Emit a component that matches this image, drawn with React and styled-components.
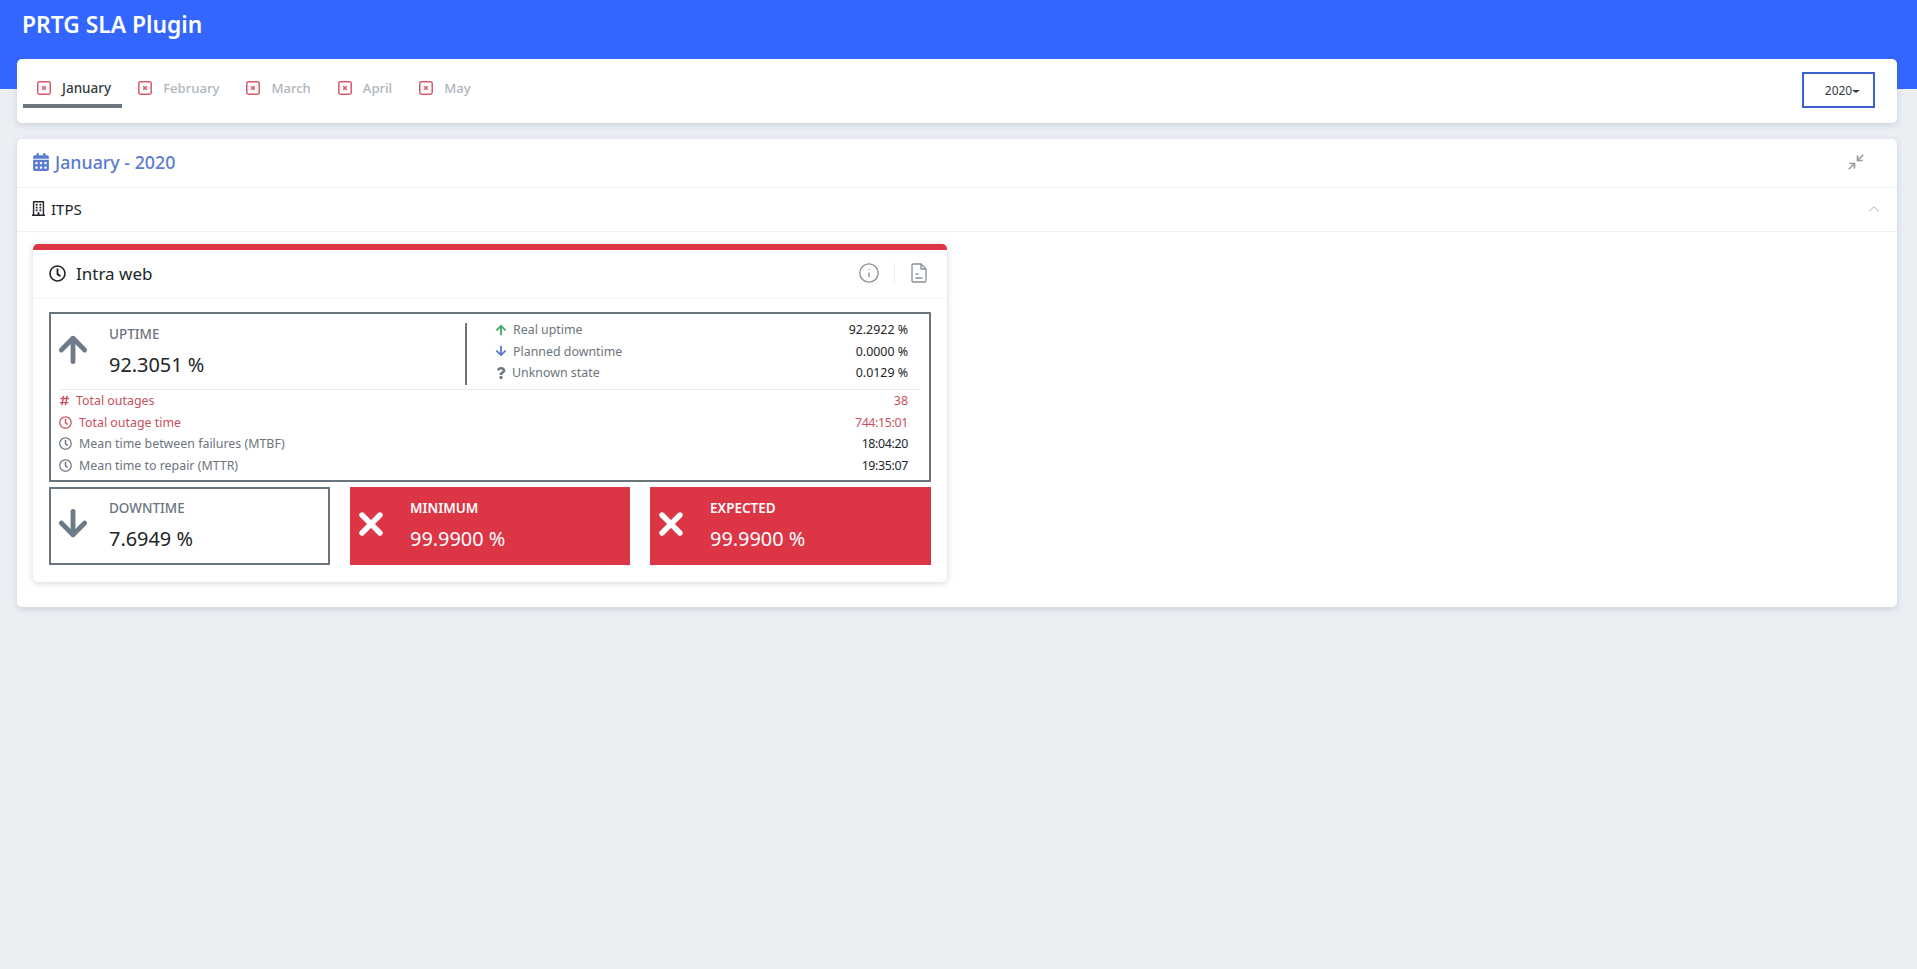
import React from "react";
import styled, { createGlobalStyle } from "styled-components";
import { FaArrowUp, FaArrowDown, FaQuestion, FaHashtag, FaRegClock, FaCalendarAlt, FaRegBuilding } from "react-icons/fa";
import { ArrowUp, ArrowDown, X, ChevronUp, Minimize2, Info } from "lucide-react";

const Global = createGlobalStyle`
  html, body { margin: 0; padding: 0; min-height: 969px; background: #ebeff4; }
  body { font-family: "Noto Sans", "Open Sans", sans-serif; color: #212529; }
  * { box-sizing: border-box; }
`;

const Header = styled.header`
  height: 89px;
  background: #3366ff;
  padding: 8px 0 0 22px;
`;
const Title = styled.h1`
  margin: 0;
  font-size: 22.8px;
  line-height: 34px;
  font-weight: 600;
  color: #fff;
`;
const Page = styled.main`
  padding: 0 20px 0 17px;
`;
const Card = styled.section`
  background: #fff;
  border-radius: 5px;
  box-shadow: 0 2px 6px rgba(70, 90, 120, 0.2);
`;
const Toolbar = styled(Card)`
  margin-top: -30px;
  height: 64px;
  display: flex;
  align-items: flex-start;
  justify-content: space-between;
  padding: 0 22px 0 6px;
`;
const Tabs = styled.nav`
  display: flex;
  padding-top: 13px;
`;
const Tab = styled.div`
  display: flex;
  align-items: center;
  gap: 11px;
  height: 36px;
  padding: 0 11px 0 14px;
  border-bottom: 4px solid ${p => (p.$active ? "#6c757d" : "transparent")};
  margin-right: 2px;
  font-size: ${p => (p.$active ? 13.5 : 13.1)}px;
  font-weight: 500;
  color: ${p => (p.$active ? "#343a40" : "#adb5bd")};
`;
const YearButton = styled.button`
  margin-top: 13px;
  width: 73px;
  height: 36px;
  border: 2px solid #3a62cf;
  background: #fff;
  font-family: inherit;
  font-size: 12px;
  color: #343a40;
  padding: 0 0 0 8px;
  display: flex;
  align-items: center;
  justify-content: center;
`;
const Caret = styled.span`
  width: 0;
  height: 0;
  margin-top: 2px;
  border-left: 4px solid transparent;
  border-right: 4px solid transparent;
  border-top: 3px solid #343a40;
`;
const Panel = styled(Card)`
  margin-top: 16px;
  height: 468px;
`;
const PanelHead = styled.div`
  height: 49px;
  display: flex;
  align-items: center;
  justify-content: space-between;
  padding: 0 32px 2px 15px;
  border-bottom: 1px solid #edf0f3;
  color: #5a7bd0;
`;
const PanelTitle = styled.h2`
  margin: 0;
  display: flex;
  align-items: center;
  gap: 5px;
  font-size: 17.8px;
  font-weight: 500;
  color: #5a7bd0;
`;
const GroupHead = styled.div`
  height: 44px;
  display: flex;
  align-items: center;
  justify-content: space-between;
  padding: 0 14px 2px 14px;
  border-bottom: 1px solid #edf0f3;
  font-size: 15px;
  color: #212529;
`;
const GroupName = styled.span`
  display: flex;
  align-items: center;
  gap: 5px;
`;
const GroupBody = styled.div`
  padding: 12px 16px;
`;
const Sla = styled.article`
  width: 914px;
  height: 338px;
  background: #fff;
  border-top: 6px solid #dc3545;
  border-radius: 5px;
  box-shadow: 0 1px 6px rgba(70, 90, 120, 0.25);
`;
const SlaHead = styled.div`
  height: 49px;
  display: flex;
  align-items: center;
  justify-content: space-between;
  padding: 0 20px 2px 16px;
  border-bottom: 1px solid #f1f3f5;
`;
const SlaName = styled.h3`
  margin: 0;
  display: flex;
  align-items: center;
  gap: 10px;
  font-size: 17px;
  font-weight: 400;
  color: #212529;
`;
const SlaTools = styled.div`
  display: flex;
  align-items: center;
  color: #868e96;
`;
const ToolDivider = styled.span`
  width: 1px;
  height: 22px;
  background: #eef0f2;
  margin: 0 16px 0 14px;
`;
const SlaBody = styled.div`
  padding: 13px 16px 0;
`;
const UptimeBox = styled.div`
  height: 170px;
  border: 2px solid #6c757d;
  padding: 9px 9px 0 8px;
`;
const TopRow = styled.div`
  display: grid;
  grid-template-columns: 406px 1fr;
  height: 62px;
`;
const Stat = styled.div`
  display: flex;
  align-items: flex-start;
  padding-top: 1px;
`;
const StatIcon = styled.span`
  width: 50px;
  flex: none;
  display: flex;
  padding-top: ${p => p.$top}px;
  color: ${p => (p.$light ? "#fff" : "#6c7a89")};
  svg { margin-left: ${p => (p.$light ? -7 : -6)}px; }
`;
const StatText = styled.div`
  display: flex;
  flex-direction: column;
`;
const StatLabel = styled.span`
  font-size: 13.5px;
  line-height: 20px;
  font-weight: ${p => (p.$light ? 600 : 500)};
  color: ${p => (p.$light ? "#fff" : "#6c757d")};
  text-transform: uppercase;
`;
const StatValue = styled.span`
  font-size: 19.9px;
  line-height: 30px;
  margin-top: 6px;
  color: ${p => (p.$light ? "#fff" : "#212529")};
`;
const Breakdown = styled.div`
  border-left: 2px solid #6c757d;
  padding: 0 12px 0 28px;
`;
const BreakdownRows = styled.div`
  margin-top: -4px;
`;
const Rows = styled.div`
  border-top: 1px solid #e9ecef;
  margin-top: 4px;
  padding-right: 12px;
`;
const Row = styled.div`
  display: flex;
  align-items: center;
  justify-content: space-between;
  height: 21.6px;
  font-size: 12.4px;
  color: ${p => (p.$danger ? "#c9505e" : "#6c757d")};
`;
const RowLabel = styled.span`
  display: flex;
  align-items: center;
  gap: ${p => p.$gap || 6}px;
`;
const RowValue = styled.span`
  color: ${p => (p.$danger ? "#c9505e" : "#212529")};
  letter-spacing: ${p => (p.$time ? "-0.35px" : "0")};
`;
const BoxRow = styled.div`
  display: grid;
  grid-template-columns: 281px 280px 281px;
  column-gap: 20px;
  margin-top: 5px;
`;
const SmallBox = styled.div`
  height: 78px;
  padding: ${p => (p.$danger ? "11px 10px 0 10px" : "9px 9px 0 8px")};
  display: flex;
  align-items: flex-start;
  border: ${p => (p.$danger ? "none" : "2px solid #6c757d")};
  background: ${p => (p.$danger ? "#dc3545" : "#fff")};
`;
const TabGlyph = () => (
  <svg width="14" height="14" viewBox="0 0 14 14" fill="none" stroke="#d9596a">
    <rect x="0.8" y="0.8" width="12.4" height="12.4" rx="1.6" strokeWidth="1.5" />
    <path d="M5.2 5.2l3.6 3.6M8.8 5.2l-3.6 3.6" strokeWidth="1.5" />
  </svg>
);
const DocGlyph = () => (
  <svg width="16" height="20" viewBox="0 0 16 20" fill="none" stroke="currentColor" strokeWidth="1.3">
    <path d="M1 2.2c0-.7.5-1.2 1.2-1.2h7.8l5 5v11.8c0 .7-.5 1.2-1.2 1.2H2.2c-.7 0-1.2-.5-1.2-1.2z" />
    <path d="M10 1v5h5M4.5 11h3M4.5 15h7" />
  </svg>
);

const months = ["January", "February", "March", "April", "May"];

export default function App() {
  return (
    <>
      <Global />
      <Header><Title>PRTG SLA Plugin</Title></Header>
      <Page>
        <Toolbar as="div">
          <Tabs>
            {months.map((m, i) => (
              <Tab key={m} $active={i === 0}><TabGlyph />{m}</Tab>
            ))}
          </Tabs>
          <YearButton>2020<Caret /></YearButton>
        </Toolbar>
        <Panel>
          <PanelHead>
            <PanelTitle><FaCalendarAlt size={18} />January - 2020</PanelTitle>
            <Minimize2 size={18} color="#999" strokeWidth={2.2} />
          </PanelHead>
          <GroupHead>
            <GroupName><FaRegBuilding size={15} />ITPS</GroupName>
            <ChevronUp size={18} color="#ccd1d6" strokeWidth={1.5} />
          </GroupHead>
          <GroupBody>
            <Sla>
              <SlaHead>
                <SlaName><FaRegClock size={17} />Intra web</SlaName>
                <SlaTools>
                  <Info size={22} strokeWidth={1.4} />
                  <ToolDivider />
                  <DocGlyph />
                </SlaTools>
              </SlaHead>
              <SlaBody>
                <UptimeBox>
                  <TopRow>
                    <Stat>
                      <StatIcon $top={6}><ArrowUp size={40} strokeWidth={2.9} /></StatIcon>
                      <StatText>
                        <StatLabel>Uptime</StatLabel>
                        <StatValue>92.3051 %</StatValue>
                      </StatText>
                    </Stat>
                    <Breakdown>
                      <BreakdownRows>
                        <Row><RowLabel><FaArrowUp size={12} color="#48a868" />Real uptime</RowLabel><RowValue>92.2922 %</RowValue></Row>
                        <Row><RowLabel><FaArrowDown size={12} color="#5a7bd0" />Planned downtime</RowLabel><RowValue>0.0000 %</RowValue></Row>
                        <Row><RowLabel $gap={5}><FaQuestion size={12} color="#6c757d" />Unknown state</RowLabel><RowValue>0.0129 %</RowValue></Row>
                      </BreakdownRows>
                    </Breakdown>
                  </TopRow>
                  <Rows>
                    <Row $danger><RowLabel $gap={6}><FaHashtag size={11} />Total outages</RowLabel><RowValue $danger>38</RowValue></Row>
                    <Row $danger><RowLabel $gap={7}><FaRegClock size={13} />Total outage time</RowLabel><RowValue $danger $time>744:15:01</RowValue></Row>
                    <Row><RowLabel $gap={7}><FaRegClock size={13} />Mean time between failures (MTBF)</RowLabel><RowValue $time>18:04:20</RowValue></Row>
                    <Row><RowLabel $gap={7}><FaRegClock size={13} />Mean time to repair (MTTR)</RowLabel><RowValue $time>19:35:07</RowValue></Row>
                  </Rows>
                </UptimeBox>
                <BoxRow>
                  <SmallBox>
                    <StatIcon $top={4.5}><ArrowDown size={40} strokeWidth={2.9} /></StatIcon>
                    <StatText><StatLabel>Downtime</StatLabel><StatValue>7.6949 %</StatValue></StatText>
                  </SmallBox>
                  <SmallBox $danger>
                    <StatIcon $light $top={8}><X size={36} strokeWidth={3.6} /></StatIcon>
                    <StatText><StatLabel $light>Minimum</StatLabel><StatValue $light>99.9900 %</StatValue></StatText>
                  </SmallBox>
                  <SmallBox $danger>
                    <StatIcon $light $top={8}><X size={36} strokeWidth={3.6} /></StatIcon>
                    <StatText><StatLabel $light>Expected</StatLabel><StatValue $light>99.9900 %</StatValue></StatText>
                  </SmallBox>
                </BoxRow>
              </SlaBody>
            </Sla>
          </GroupBody>
        </Panel>
      </Page>
    </>
  );
}
